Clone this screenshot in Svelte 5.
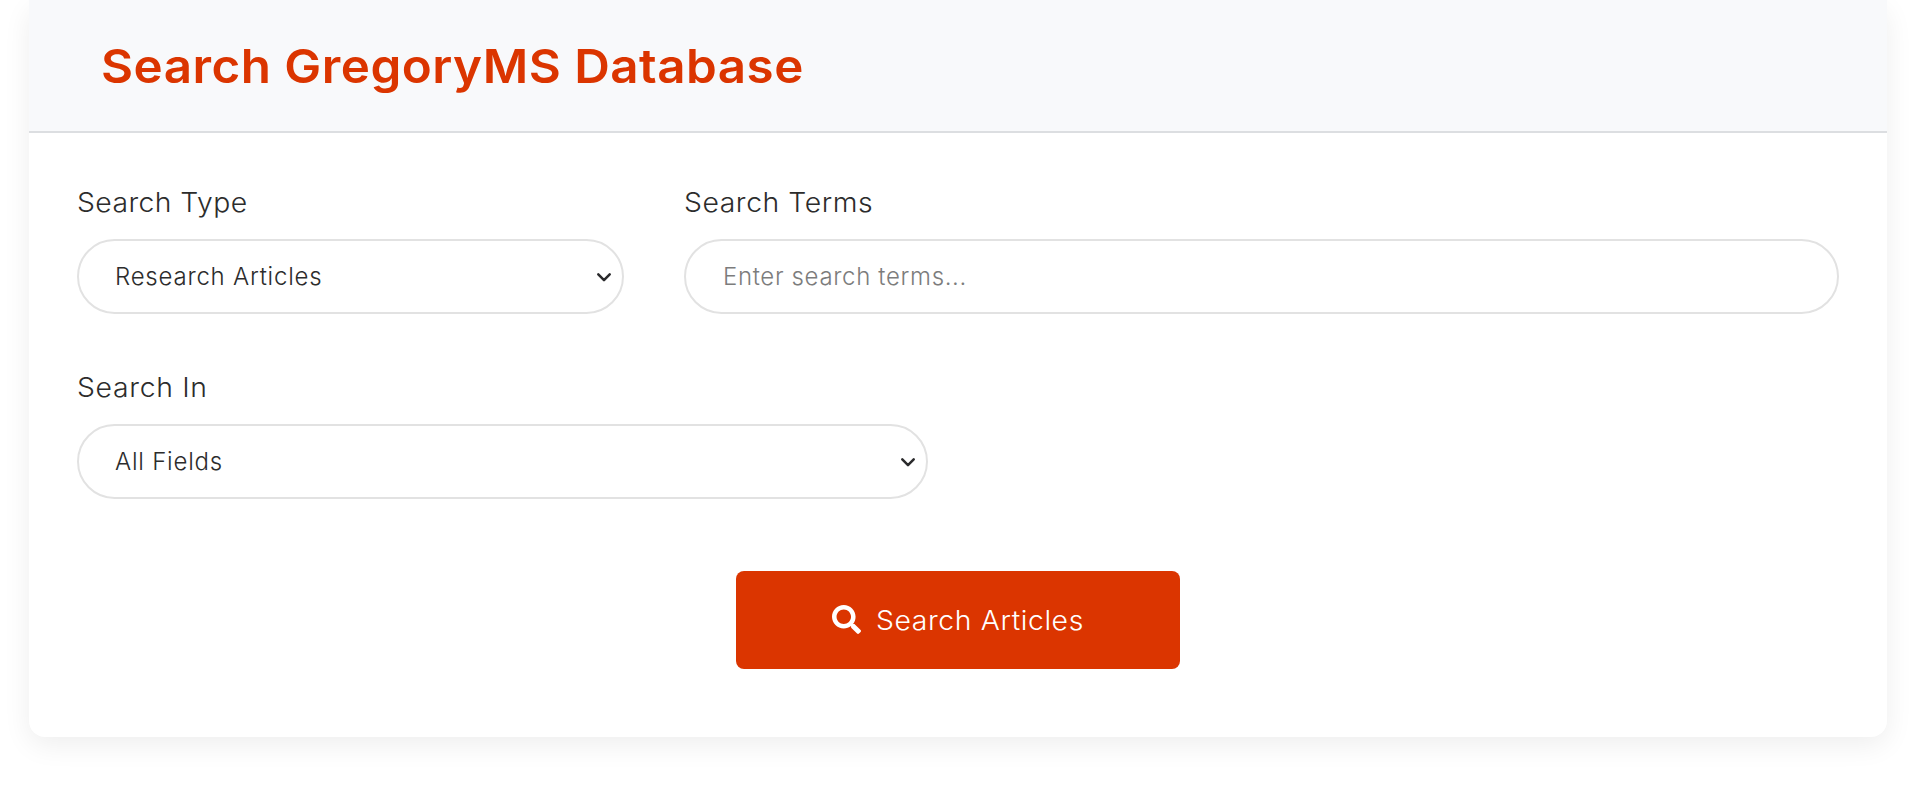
<script>
  let type = $state('articles');
  let terms = $state('');
  let field = $state('all');
</script>

{#snippet chevron()}
  <svg class="chevron" viewBox="0 0 14 9" aria-hidden="true">
    <path d="M1.3 1.4 L7 7.2 L12.7 1.4" fill="none" stroke="#2a2a2c" stroke-width="2.5" stroke-linecap="round" stroke-linejoin="round" />
  </svg>
{/snippet}

<main>
  <section class="card">
    <header>
      <h1>Search GregoryMS Database</h1>
    </header>
    <form onsubmit={(e) => e.preventDefault()}>
      <div class="row">
        <div class="field type">
          <label class="l-type" for="type">Search Type</label>
          <div class="control">
            <select id="type" bind:value={type}>
              <option value="articles">Research Articles</option>
            </select>
            {@render chevron()}
          </div>
        </div>
        <div class="field terms">
          <label class="l-terms" for="terms">Search Terms</label>
          <div class="control">
            <input id="terms" type="text" placeholder="Enter search terms..." bind:value={terms} />
          </div>
        </div>
      </div>
      <div class="row">
        <div class="field in">
          <label class="l-in" for="field">Search In</label>
          <div class="control">
            <select id="field" bind:value={field}>
              <option value="all">All Fields</option>
            </select>
            {@render chevron()}
          </div>
        </div>
      </div>
      <button type="submit">
        <svg class="search" viewBox="0 0 512 512" aria-hidden="true">
          <path fill="#fff" d="M505 442.7L405.3 343c-4.5-4.5-10.6-7-17-7H372c27.6-35.3 44-79.7 44-128C416 93.1 322.9 0 208 0S0 93.1 0 208s93.1 208 208 208c48.3 0 92.7-16.4 128-44v16.3c0 6.4 2.5 12.5 7 17l99.7 99.7c9.4 9.4 24.6 9.4 33.9 0l28.3-28.3c9.4-9.4 9.4-24.6.1-34zM208 336c-70.7 0-128-57.2-128-128 0-70.7 57.2-128 128-128 70.7 0 128 57.2 128 128 0 70.7-57.2 128-128 128z" />
        </svg>
        <span>Search Articles</span>
      </button>
    </form>
  </section>
</main>

<style>
  :global(body) {
    margin: 0;
    background: #fff;
  }

  main {
    box-sizing: border-box;
    height: 786px;
    padding: 0 29px 49px;
    overflow: hidden;
  }

  .card {
    height: 737px;
    border-radius: 16px;
    background: #fff;
    box-shadow: 0 8px 28px rgba(0, 0, 0, 0.07);
    color: #2c2c2c;
    font-family: Inter, 'Liberation Sans', sans-serif;
  }

  header {
    box-sizing: border-box;
    height: 133px;
    padding: 38px 72px 0;
    background: #f8f9fb;
    border-bottom: 2px solid #dcdee1;
  }

  h1,
  label,
  button span {
    transform: scaleX(1.05);
    transform-origin: left;
  }

  h1 {
    width: fit-content;
    margin: 0;
    color: #db3500;
    font-size: 47px;
    font-weight: 600;
    line-height: 56px;
    letter-spacing: 0.45px;
    white-space: nowrap;
  }

  form {
    display: flex;
    flex-direction: column;
    padding: 50px 48px 0;
  }

  .row {
    display: flex;
    gap: 60px;
    height: 185px;
  }

  .type {
    width: 547px;
  }

  .terms {
    flex: 1;
  }

  .in {
    width: 851px;
  }

  label {
    display: block;
    width: fit-content;
    height: 56px;
    font-size: 27px;
    font-weight: 360;
    line-height: 40px;
  }

  .l-type {
    letter-spacing: 0.4px;
  }

  .l-terms {
    letter-spacing: 0.53px;
  }

  .l-in {
    letter-spacing: 0.65px;
  }

  .control {
    position: relative;
  }

  select,
  input {
    display: block;
    box-sizing: border-box;
    width: 100%;
    height: 75px;
    margin: 0;
    padding: 0 36px;
    border: 2px solid #e2e2e2;
    border-radius: 38px;
    outline: 0;
    appearance: none;
    background: #fff;
    color: #2c2c2c;
    font-family: inherit;
    font-size: 24px;
    font-weight: 360;
    letter-spacing: 0.77px;
  }

  input {
    padding-left: 37px;
    letter-spacing: 0.65px;
  }

  input::placeholder {
    color: #7c7c7c;
    opacity: 1;
  }

  .chevron {
    position: absolute;
    top: 34px;
    right: 13px;
    width: 14px;
    height: 9px;
    pointer-events: none;
  }

  button {
    display: flex;
    align-items: center;
    align-self: center;
    box-sizing: border-box;
    width: 444px;
    height: 98px;
    margin-top: 18px;
    padding: 0 0 0 96px;
    border: 0;
    border-radius: 8px;
    background: #db3500;
    color: #fff;
    font-family: inherit;
    font-size: 27px;
    font-weight: 340;
    line-height: 40px;
    letter-spacing: 0.58px;
  }

  button span {
    position: relative;
    top: 1px;
  }

  .search {
    width: 29px;
    height: 29px;
    margin: -1px 15px 0 0;
  }
</style>
